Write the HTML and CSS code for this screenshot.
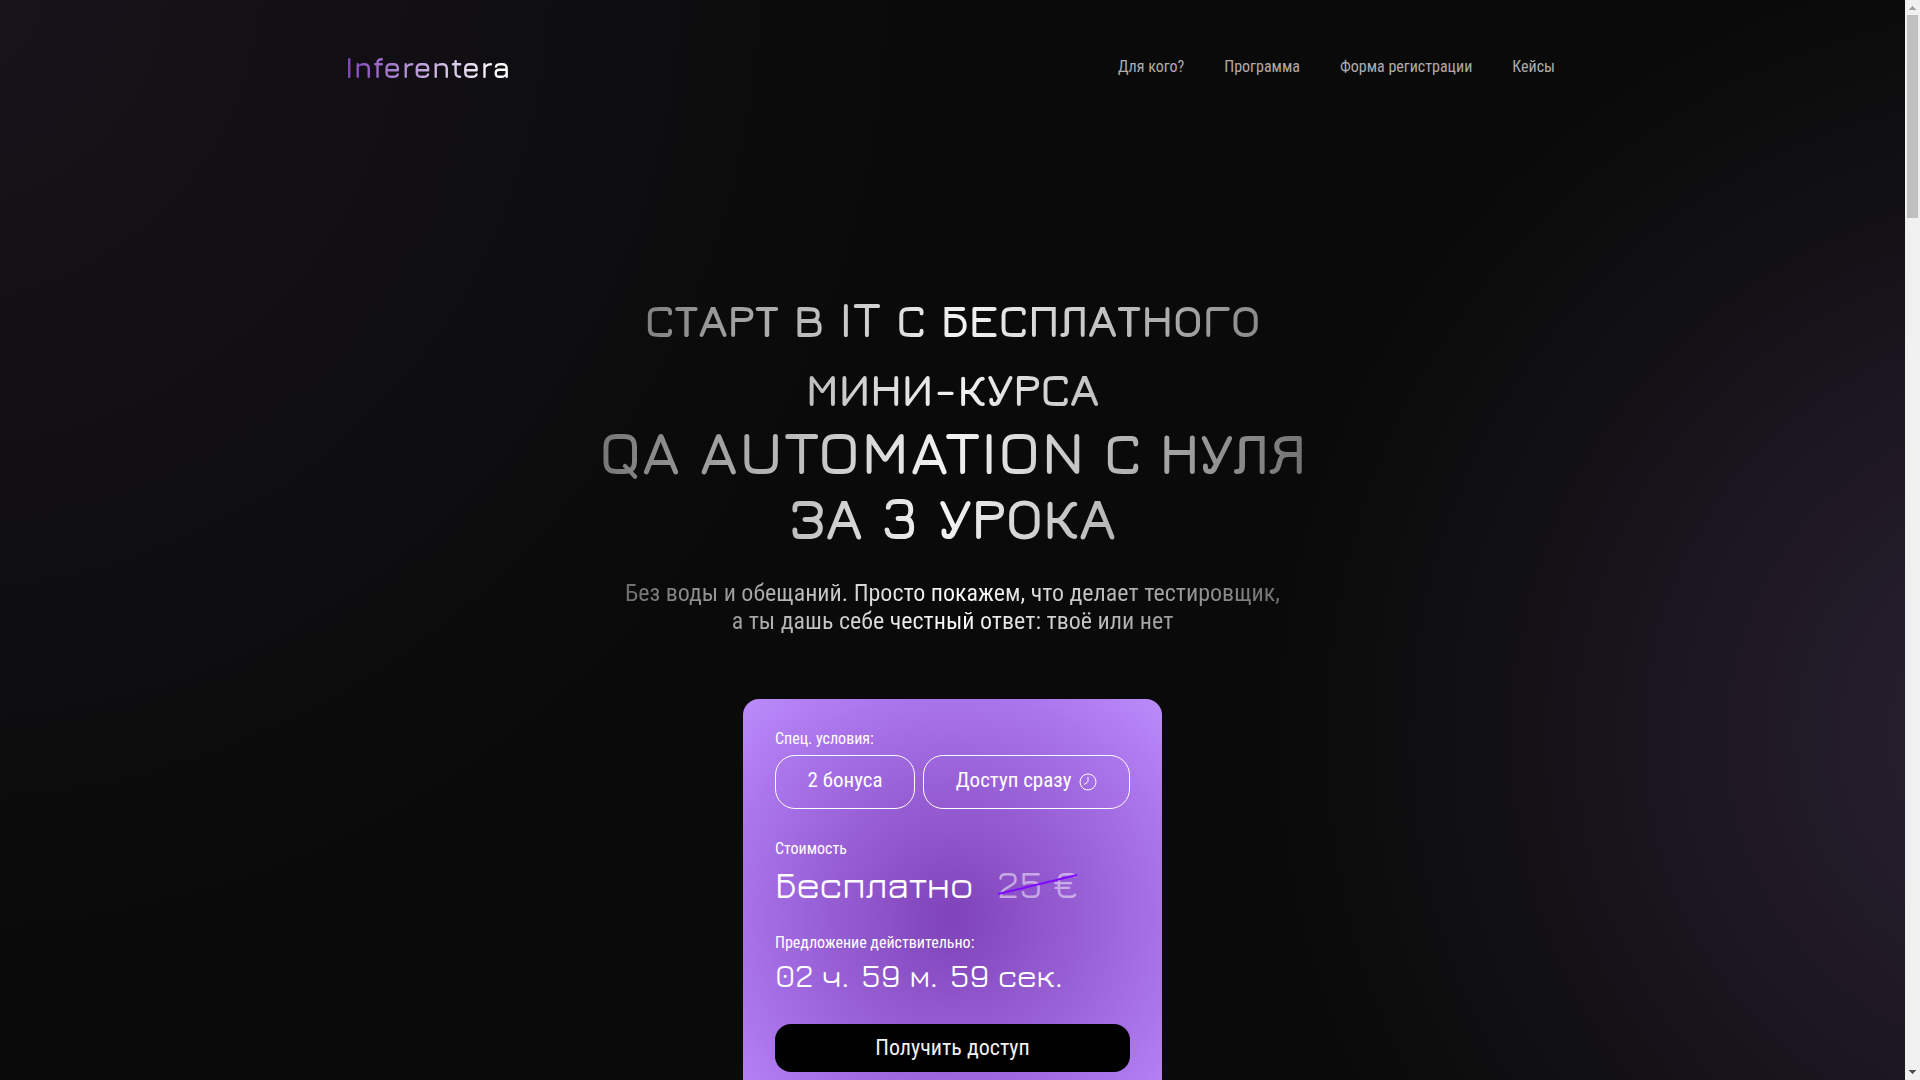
FILE: index.html
```html
<!DOCTYPE html>
<html lang="ru">
<head>
<meta charset="utf-8">
<title>Inferentera</title>
<link rel="stylesheet" href="styles.css">
</head>
<body>
<div class="page">
  <header class="header">
    <a class="logo" href="#">Inferentera</a>
    <nav class="nav">
      <a href="#who">Для кого?</a>
      <a href="#program">Программа</a>
      <a href="#form">Форма регистрации</a>
      <a href="#cases">Кейсы</a>
    </nav>
  </header>
  <main class="hero">
    <h1 class="title">
      <span class="title-lead">Старт в IT с бесплатного<br>мини-курса</span>
      <span class="title-main">QA Automation с нуля<br>за 3 урока</span>
    </h1>
    <p class="subtitle">Без воды и обещаний. Просто покажем, что делает тестировщик,<br>а ты дашь себе честный ответ: твоё или нет</p>
    <section class="card">
      <p class="label">Спец. условия:</p>
      <div class="perks">
        <span class="perk">2 бонуса</span>
        <span class="perk">Доступ сразу
          <svg class="clock" viewBox="0 0 18 18" aria-hidden="true"><circle cx="9" cy="9" r="8"/><path d="M9 4v3.500Q9 9 8 9.700L5 11.500"/></svg>
        </span>
      </div>
      <p class="label">Стоимость</p>
      <div class="price">
        <strong>Бесплатно</strong>
        <span class="old">25 €<svg class="strike" viewBox="0 0 76 22" preserveAspectRatio="none" aria-hidden="true"><path d="M1 20L75 1"/></svg></span>
      </div>
      <p class="label">Предложение действительно:</p>
      <div class="timer"><span>02 ч.</span><span>59 м.</span><span>59 сек.</span></div>
      <button class="cta" type="button">Получить доступ</button>
    </section>
  </main>
</div>
<div class="scrollbar" aria-hidden="true">
  <svg class="arrow up" viewBox="0 0 7 4"><path d="M3 0h1v1h1v1h1v1h1v1H0V3h1V2h1V1h1z"/></svg>
  <div class="thumb"></div>
  <svg class="arrow down" viewBox="0 0 7 4"><path d="M0 0h7v1H6v1H5v1H4v1H3V3H2V2H1V1H0z"/></svg>
</div>
</body>
</html>
```
FILE: styles.css
```css
:root {
  --display: Jura, Inter, sans-serif;
  --text: "Roboto Condensed", Roboto, sans-serif;
}

* { box-sizing: border-box; }

body {
  display: flex;
  height: 100vh;
  margin: 0;
  overflow: hidden;
  background: #0a0a0a;
  color: #fff;
  font: 16px/20px var(--text);
}

p, h1 { margin: 0; }

.page {
  flex: 1;
  overflow: hidden;
  padding: 0 24px;
  background:
    radial-gradient(circle 780px at calc(100% + 151px) 737px, #2c2236 0, #251d2c 20%, #1d1722 45%, #131116 68%, #0d0d0e 88%, transparent 100%),
    radial-gradient(circle 960px at -60px -20px, #17141b 0, #110f13 50%, transparent 100%),
    #0a0a0a;
}

.header {
  display: flex;
  align-items: center;
  justify-content: space-between;
  max-width: 1215px;
  height: 134px;
  margin: 0 auto;
  padding-right: 5px;
}

.logo {
  background: linear-gradient(90deg, #7f42b8, #fff 92%);
  background-clip: text;
  color: transparent;
  font: 700 29px/40px var(--display);
  text-decoration: none;
}

.nav { display: flex; gap: 40px; }
.nav a { color: #adadad; text-decoration: none; }

.hero {
  display: flex;
  flex-direction: column;
  align-items: center;
  padding-top: 151px;
}

.title {
  display: flex;
  flex-direction: column;
  background: linear-gradient(97deg, #6e6e6e, #f4f4f4 50%, #6e6e6e);
  background-clip: text;
  color: transparent;
  font-family: var(--display);
  font-weight: 700;
  text-align: center;
  text-transform: uppercase;
}

.title-lead { font-size: 47px; line-height: 69px; }
.title-main { margin-top: -3px; font-size: 59px; line-height: 65px; }

.subtitle {
  margin: 29px 0 64px;
  background: linear-gradient(97deg, #6e6e6e, #fff 50%, #6e6e6e);
  background-clip: text;
  color: transparent;
  font-size: 24px;
  line-height: 28px;
  text-align: center;
}

.card {
  width: 100%;
  max-width: 419px;
  padding: 30px 32px 64px;
  border-radius: 16px;
  background: radial-gradient(circle farthest-corner, #7f42b8, #a872e8 70%, #bb8cfc);
}

.perks { display: flex; gap: 8px; margin: 6px 0 30px; }

.perk {
  display: flex;
  flex: 1 0 auto;
  align-items: center;
  justify-content: center;
  gap: 8px;
  height: 54px;
  padding: 0 31px 4px;
  border: 1px solid #fff;
  border-radius: 20px;
  font-size: 21px;
  white-space: nowrap;
}

.clock { width: 18px; height: 18px; margin-top: 3px; fill: none; stroke: #fff; stroke-width: 1; }

.price {
  display: flex;
  align-items: center;
  gap: 24px;
  margin: 5px 0 29px;
  font: 500 38px/40px var(--display);
}

.price strong { font-weight: 500; }

.old { position: relative; color: #ffffff80; }
.strike { position: absolute; left: 0; top: 10px; width: 100%; height: 22px; fill: none; stroke: #7d0aff; stroke-width: 2; }

.timer { display: flex; gap: 12px; margin: 2px 0 29px; font: 500 32px/40px var(--display); }

.cta {
  width: 100%;
  height: 48px;
  padding: 0;
  border: 0;
  border-radius: 16px;
  background: #000;
  color: #f0f0f0;
  font: 22px/28px var(--text);
}

.scrollbar {
  display: flex;
  flex-direction: column;
  align-items: center;
  width: 15px;
  padding: 6px 0;
  background: #f0f0f0;
}

.thumb { width: 11px; height: 19%; margin: 5px 0 auto; background: #c0c0c0; }
.arrow { width: 7px; height: 4px; fill: #a0a0a0; }
.down { fill: #505050; }
```
